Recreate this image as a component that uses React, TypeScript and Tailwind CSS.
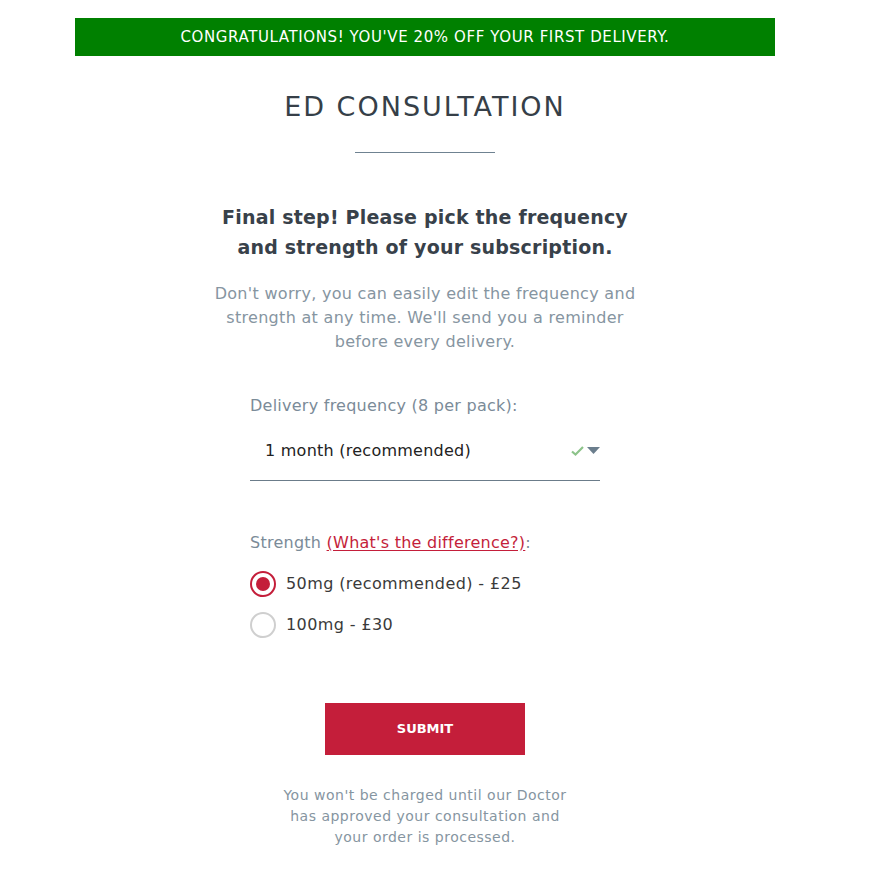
import React, { useState } from 'react';

const font = { fontFamily: '"DejaVu Sans", "Open Sans", sans-serif' };

export default function App() {
  const [strength, setStrength] = useState('50');

  return (
    <div className="min-h-[878px] bg-white pt-[18px]" style={font}>
      {/* Discount banner */}
      <div className="ml-[75px] flex h-[38px] w-[700px] items-center justify-center bg-[#008000] text-[15px] uppercase tracking-[0.6px] text-white">
        Congratulations! You've 20% off your first delivery.
      </div>

      <div className="ml-[75px] flex w-[700px] flex-col items-center">
        <h1 className="mt-[31px] text-[27px] font-normal tracking-[2px] text-[#363f48]">
          ED CONSULTATION
        </h1>
        <div className="mt-[24px] h-px w-[140px] bg-[#6f8291]" />

        <h2 className="mt-[49px] text-center text-[19px] font-bold leading-[30px] tracking-[0.2px] text-[#38414a]">
          Final step! Please pick the frequency
          <br />
          and strength of your subscription.
        </h2>

        <p className="mt-[20px] w-[430px] text-center text-[16px] leading-[24px] tracking-[0.3px] text-[#8695a1]">
          Don't worry, you can easily edit the frequency and strength at any time. We'll send you a reminder
          before every delivery.
        </p>

        {/* Form */}
        <div className="mt-[40px] w-[350px] tracking-[0.25px]">
          <label className="block text-[16px] leading-[24px] text-[#7b8b98]">
            Delivery frequency (8 per pack):
          </label>
          <div className="mt-[10px] flex h-[53px] items-start justify-between border-b border-[#6b7c8a] pl-[15px] pt-[11px]">
            <span className="text-[16px] leading-[24px] text-[#222]">1 month (recommended)</span>
            <span className="mt-[7px] flex items-center gap-[3px]">
              <svg width="13" height="10" viewBox="0 0 13 10">
                <path d="M1 5.5 L4.5 8.5 L12 1" stroke="#8cc38a" strokeWidth="2.2" fill="none" />
              </svg>
              <svg width="13" height="8" viewBox="0 0 13 8">
                <path d="M0 0 H13 L6.5 7 Z" fill="#6b7e8d" />
              </svg>
            </span>
          </div>

          <div className="mt-[50px] text-[16px] leading-[24px] text-[#7b8b98]">
            Strength{' '}
            <a href="#" className="text-[#c41e3a] underline underline-offset-2">
              (What's the difference?)
            </a>
            :
          </div>

          <div className="mt-[16px] flex flex-col gap-[15px]">
            {[
              { id: '50', label: '50mg (recommended) - £25' },
              { id: '100', label: '100mg - £30' },
            ].map((o) => (
              <label key={o.id} className="flex cursor-pointer items-center gap-[10px]" onClick={() => setStrength(o.id)}>
                <span
                  className={
                    strength === o.id
                      ? 'flex h-[26px] w-[26px] items-center justify-center rounded-full border-2 border-[#c41e3a]'
                      : 'flex h-[26px] w-[26px] items-center justify-center rounded-full border-2 border-[#cfcfcf]'
                  }
                >
                  {strength === o.id && <span className="h-[14px] w-[14px] rounded-full bg-[#c41e3a]" />}
                </span>
                <span className="text-[16px] tracking-[0.4px] text-[#3a3a3a]">{o.label}</span>
              </label>
            ))}
          </div>
        </div>

        <button className="mt-[65px] h-[52px] w-[200px] bg-[#c41e3a] text-[13px] font-bold text-white">
          SUBMIT
        </button>

        <p className="mt-[30px] w-[292px] text-center text-[14px] leading-[21px] tracking-[0.5px] text-[#8695a1]">
          You won't be charged until our Doctor has approved your consultation and your order is processed.
        </p>
      </div>
    </div>
  );
}
